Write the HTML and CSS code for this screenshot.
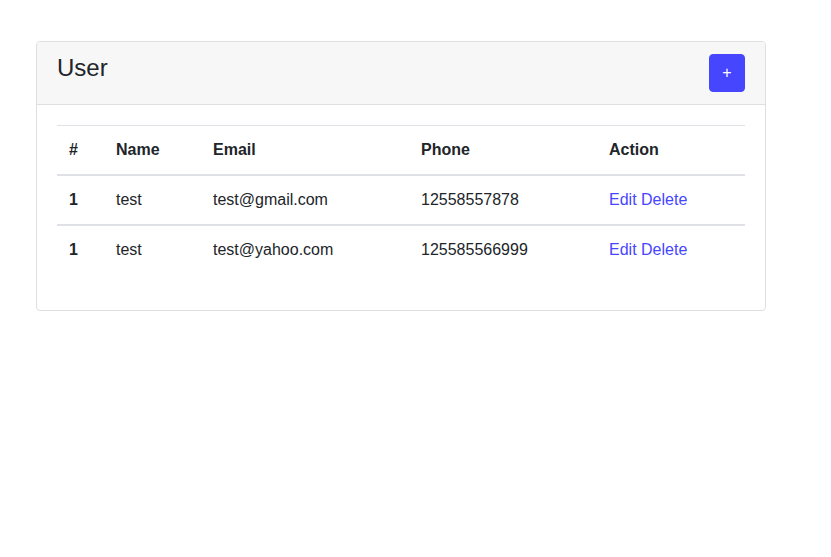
FILE: index.html
```html
<!DOCTYPE html>
<html lang="en">
<head>
<meta charset="utf-8">
<title>User</title>
<link rel="stylesheet" href="styles.css">
</head>
<body>
<div class="page">
  <div class="card">
    <div class="card-header">
      <h4 class="card-title">User</h4>
      <button class="btn-add" type="button">+</button>
    </div>
    <div class="card-body">
      <table class="table">
        <colgroup>
          <col class="c-id"><col class="c-name"><col class="c-email"><col class="c-phone"><col class="c-action">
        </colgroup>
        <thead>
          <tr><th>#</th><th>Name</th><th>Email</th><th>Phone</th><th>Action</th></tr>
        </thead>
        <tbody>
          <tr><th>1</th><td>test</td><td>test@gmail.com</td><td>12558557878</td><td><a href="#">Edit</a> <a href="#">Delete</a></td></tr>
          <tr><th>1</th><td>test</td><td>test@yahoo.com</td><td>125585566999</td><td><a href="#">Edit</a> <a href="#">Delete</a></td></tr>
        </tbody>
      </table>
    </div>
  </div>
</div>
</body>
</html>
```

FILE: styles.css
```css
* { box-sizing: border-box; }
html, body { margin: 0; padding: 0; background: #fff; }
body {
  font-family: "Liberation Sans", Arial, Helvetica, sans-serif;
  font-size: 16px;
  line-height: 1.5;
  color: #212529;
}
.page { padding: 41px 0 0 36px; }
.card {
  width: 730px;
  border: 1px solid #dfdfdf;
  border-radius: 4px;
  background: #fff;
}
.card-header {
  display: flex;
  justify-content: space-between;
  align-items: flex-start;
  padding: 12px 20px;
  background: #f7f7f7;
  border-bottom: 1px solid #dfdfdf;
  border-radius: 3px 3px 0 0;
}
.card-title {
  margin: 0;
  font-size: 24px;
  font-weight: 400;
  line-height: 1.2;
}
.btn-add {
  font-family: inherit;
  font-size: 16px;
  line-height: 1.5;
  padding: 6px 0;
  width: 36px;
  height: 38px;
  color: #fff;
  background: #4646ff;
  border: 1px solid #4646ff;
  border-radius: 4px;
  cursor: pointer;
}
.card-body { padding: 20px 20px 20px 20px; }
.table {
  width: 100%;
  table-layout: fixed;
  border-collapse: collapse;
  margin-bottom: 16px;
}
.c-id { width: 47px; }
.c-name { width: 97px; }
.c-email { width: 208px; }
.c-phone { width: 188px; }
.c-action { width: 148px; }
.table th, .table td {
  padding: 12px;
  text-align: left;
  vertical-align: top;
  line-height: 24px;
  border-top: 1px solid #dee2e6;
}
.table thead th { font-weight: 700; border-bottom: 2px solid #dee2e6; }
.table tbody tr + tr th, .table tbody tr + tr td { border-top: 2px solid #dee2e6; }
.table tbody th { font-weight: 700; }
.table a { color: #4646ff; text-decoration: none; }
```
